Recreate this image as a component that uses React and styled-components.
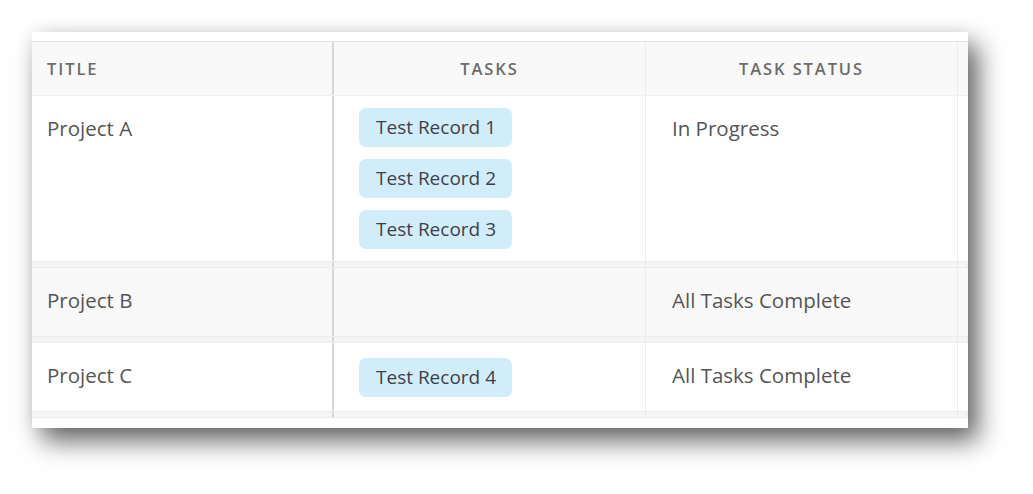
import React from 'react'
import styled, { createGlobalStyle } from 'styled-components'

const GlobalStyle = createGlobalStyle`
  body {
    margin: 0;
    background: #fff;
    font-family: "Open Sans", "Noto Sans", sans-serif;
  }
`

const projects = [
  { title: 'Project A', tasks: ['Test Record 1', 'Test Record 2', 'Test Record 3'], status: 'In Progress' },
  { title: 'Project B', tasks: [], status: 'All Tasks Complete', shaded: true },
  { title: 'Project C', tasks: ['Test Record 4'], status: 'All Tasks Complete' },
]

function App() {
  return (
    <Page>
      <GlobalStyle />
      <Card>
        <Row $header>
          <Cell $first><HeadText>Title</HeadText></Cell>
          <Cell $center><HeadText>Tasks</HeadText></Cell>
          <Cell $center><HeadText>Task Status</HeadText></Cell>
          <Cell />
        </Row>
        {projects.map((p) => (
          <React.Fragment key={p.title}>
            <Row $shaded={p.shaded}>
              <Cell $first><Text>{p.title}</Text></Cell>
              <Cell $tasks>
                {p.tasks.map((t) => <Tag key={t}>{t}</Tag>)}
              </Cell>
              <Cell $status><Text>{p.status}</Text></Cell>
              <Cell />
            </Row>
            <Gap>
              <GapCell $first />
              <GapCell />
              <GapCell />
              <GapCell />
            </Gap>
          </React.Fragment>
        ))}
      </Card>
    </Page>
  )
}

const Page = styled.div`
  padding: 32px 0 0 32px;
  min-height: 494px;
  box-sizing: border-box;
`

const Card = styled.div`
  width: 936px;
  background: #fff;
  padding: 9px 0 10px;
  box-shadow: 10px 13px 24px rgba(0, 0, 0, 0.6), 0 0 16px rgba(0, 0, 0, 0.07);
  overflow: hidden;
`

const Row = styled.div`
  display: grid;
  grid-template-columns: 302px 312px 312px 1fr;
  background: ${(p) => (p.$header || p.$shaded ? '#f9f9f9' : '#fff')};
  border-top: ${(p) => (p.$header ? '1px solid #e6e6e6' : 'none')};
  border-bottom: 1px solid ${(p) => (p.$header ? '#f0f0f0' : '#ececec')};
  min-height: ${(p) => (p.$header ? '53px' : '68px')};
`

const Cell = styled.div`
  display: flex;
  flex-direction: ${(p) => (p.$tasks ? 'column' : 'row')};
  align-items: ${(p) => (p.$tasks ? 'flex-start' : 'center')};
  justify-content: ${(p) => (p.$center || p.$tasks ? 'center' : 'flex-start')};
  gap: 12px;
  padding: ${(p) => (p.$tasks ? '12px 25px 12px' : p.$status ? '0 26px' : '0 15px')};
  align-self: stretch;
  border-right: ${(p) => (p.$first ? '2px solid #d8d8d8' : '1px solid #ececec')};
  & > span {
    align-self: flex-start;
    margin-top: 19px;
  }
`

const Gap = styled.div`
  display: grid;
  grid-template-columns: 302px 312px 312px 1fr;
  height: 5px;
  background: #f5f5f5;
  border-bottom: 1px solid #ececec;
`

const GapCell = styled.div`
  border-right: ${(p) => (p.$first ? '2px solid #d8d8d8' : '1px solid #ececec')};
`

const HeadText = styled.div`
  font-size: 16.5px;
  font-weight: 600;
  letter-spacing: 1.9px;
  text-transform: uppercase;
  color: #6c6c6c;
`

const Text = styled.span`
  font-size: 20.5px;
  color: #555;
  line-height: 26px;
`

const Tag = styled.div`
  background: #d2edfa;
  color: #3f3f4a;
  font-size: 19px;
  line-height: 24px;
  padding: 7px 16px 8px 17px;
  border-radius: 7px;
`

export default App
